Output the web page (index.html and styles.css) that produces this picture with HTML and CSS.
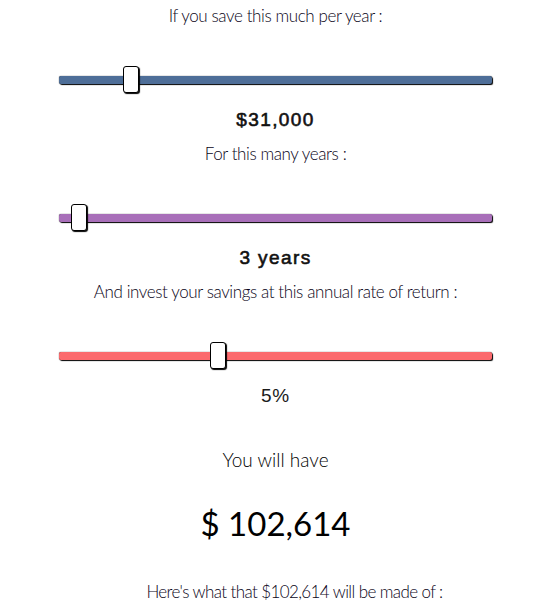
FILE: index.html
```html
<!DOCTYPE html>
<html>
<head>
<meta charset="utf-8">
<link rel="stylesheet" href="styles.css">
</head>
<body>
<main class="calc">
  <section class="field">
    <p class="label">If you save this much per year :</p>
    <input class="range range-blue" type="range" min="0" max="1000" value="153">
    <p class="value value-strong">$31,000</p>
  </section>
  <section class="field">
    <p class="label">For this many years :</p>
    <input class="range range-purple" type="range" min="0" max="1000" value="29">
    <p class="value value-strong">3 years</p>
  </section>
  <section class="field">
    <p class="label">And invest your savings at this annual rate of return :</p>
    <input class="range range-red" type="range" min="0" max="1000" value="361">
    <p class="value value-plain">5%</p>
  </section>
  <section class="result">
    <p class="result-intro">You will have</p>
    <p class="result-amount">$ 102,614</p>
    <p class="label breakdown">Here's what that $102,614 will be made of :</p>
  </section>
</main>
</body>
</html>
```
FILE: styles.css
```css
html, body {
  margin: 0;
  padding: 0;
  background: #fff;
}
body {
  color: #1c1427;
}
.calc {
  padding: 0 52px 0 59px;
  text-align: center;
}
p {
  margin: 0;
}
.field {
  display: flex;
  flex-direction: column;
  align-items: center;
}
.label {
  font-family: Lato, sans-serif;
  font-weight: 300;
  font-size: 17px;
  letter-spacing: -0.4px;
  line-height: 20px;
  color: #0a0418;
}
.field:first-child .label {
  margin-top: 6px;
}
.field .label {
  margin-bottom: 40px;
}
.value {
  font-family: "Liberation Sans", Arial, sans-serif;
  font-weight: 400;
  font-size: 19px;
  line-height: 24px;
  color: #111;
  margin-top: 14px;
  margin-bottom: 12px;
}
.value-strong {
  letter-spacing: 1.4px;
  -webkit-text-stroke: 0.6px #111;
}
.value-plain {
  letter-spacing: 0.8px;
  color: #1a1a1a;
}
.range {
  -webkit-appearance: none;
  appearance: none;
  width: 100%;
  height: 28px;
  margin: 0;
  background: transparent;
}
.range:focus {
  outline: none;
}
.range::-webkit-slider-runnable-track {
  height: 8px;
  border-radius: 2px;
  box-shadow: 1px 1px 1px #000, 0 0 1px #0d0d0d;
  background: #4e6e98;
}
.range-purple::-webkit-slider-runnable-track {
  background: #a86fb9;
}
.range-red::-webkit-slider-runnable-track {
  background: #fb6a6d;
}
.range::-webkit-slider-thumb {
  -webkit-appearance: none;
  appearance: none;
  width: 16px;
  height: 27px;
  margin-top: -10px;
  border: 1px solid #000;
  border-radius: 3px;
  background: #fff;
  box-shadow: 1px 1px 1px #000;
  box-sizing: border-box;
}
.result {
  display: flex;
  flex-direction: column;
  align-items: center;
  padding-top: 28px;
}
.result-intro {
  font-family: Lato, sans-serif;
  font-weight: 300;
  font-size: 19px;
  line-height: 24px;
  color: #000;
}
.result-amount {
  font-family: Lato, sans-serif;
  font-size: 33px;
  line-height: 44px;
  color: #000;
  margin-top: 29px;
}
.breakdown {
  margin-top: 37px;
  padding-left: 38px;
  letter-spacing: -0.6px;
}
```
